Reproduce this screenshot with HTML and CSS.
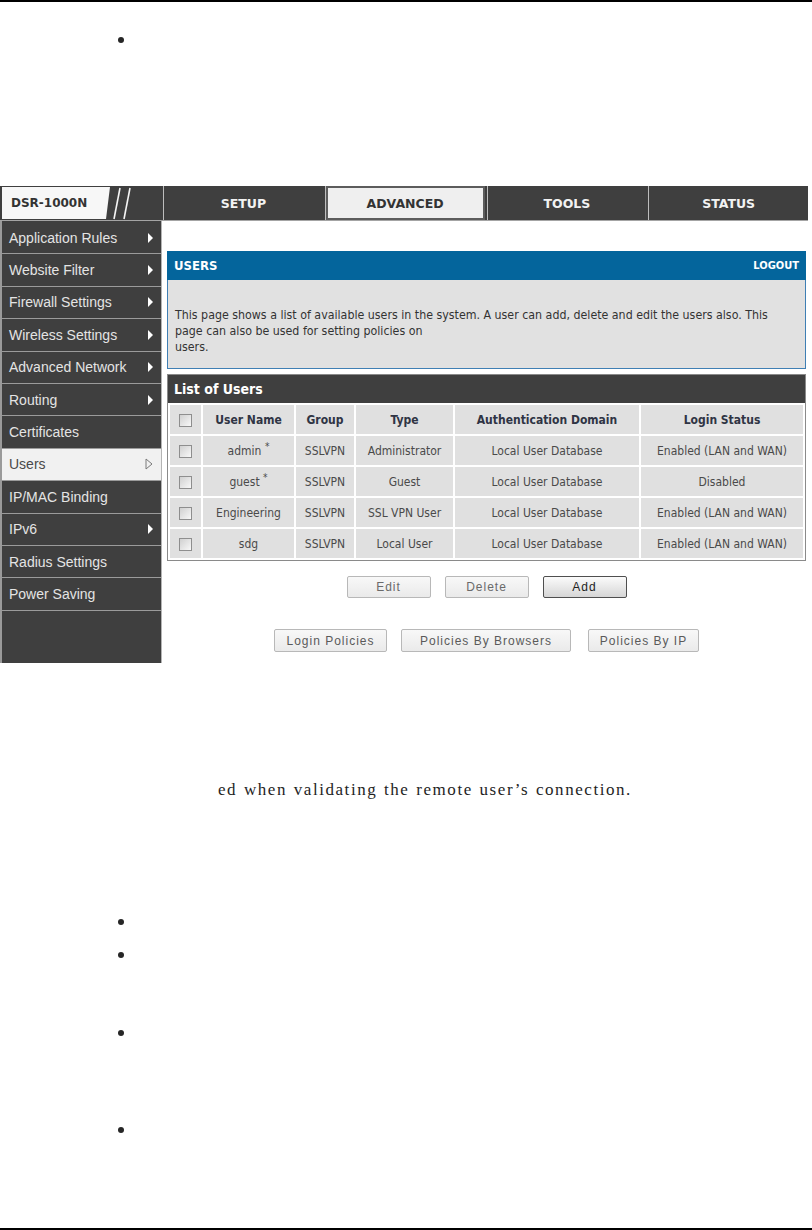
FILE: index.html
```html
<!DOCTYPE html>
<html lang="en">

<head>
    <meta charset="UTF-8">
    <title>DSR-1000N Users</title>
    <link rel="stylesheet" href="styles.css">
</head>

<body>
    <div class="page">
        <ul class="bullets bullets-top">
            <li></li>
        </ul>

        <div class="shot">
            <div class="topbar">
                <div class="logo">
                    <span class="logo-name">DSR-1000N</span>
                    <svg class="logo-slashes" width="30" height="33" viewBox="0 0 30 33">
                        <line x1="12" y1="1" x2="6" y2="32" stroke="#f4f4f4" stroke-width="1.6" />
                        <line x1="22" y1="1" x2="16" y2="32" stroke="#f4f4f4" stroke-width="1.6" />
                    </svg>
                </div>
                <div class="tab">SETUP</div>
                <div class="tab active">ADVANCED</div>
                <div class="tab">TOOLS</div>
                <div class="tab">STATUS</div>
            </div>

            <div class="main">
                <ul class="sidenav">
                    <li class="has-sub">Application Rules</li>
                    <li class="has-sub">Website Filter</li>
                    <li class="has-sub">Firewall Settings</li>
                    <li class="has-sub">Wireless Settings</li>
                    <li class="has-sub">Advanced Network</li>
                    <li class="has-sub">Routing</li>
                    <li>Certificates</li>
                    <li class="current">Users
                        <svg class="open-arrow" width="8" height="12" viewBox="0 0 8 12">
                            <path d="M1 1 L7 6 L1 11 Z" fill="none" stroke="#7a7a7a" stroke-width="1" />
                        </svg>
                    </li>
                    <li>IP/MAC Binding</li>
                    <li class="has-sub">IPv6</li>
                    <li>Radius Settings</li>
                    <li>Power Saving</li>
                </ul>

                <div class="content">
                    <div class="panel">
                        <div class="panel-head">
                            <span class="panel-title">USERS</span>
                            <span class="logout">LOGOUT</span>
                        </div>
                        <div class="panel-body">
                            This page shows a list of available users in the system. A user can add, delete and edit the users also. This<br>
                            page can also be used for setting policies on<br>
                            users.
                        </div>
                    </div>

                    <div class="list-box">
                        <div class="list-head">List of Users</div>
                        <table class="users">
                            <thead>
                                <tr>
                                    <th class="col-check"><span class="checkbox"></span></th>
                                    <th class="col-name">User Name</th>
                                    <th class="col-group">Group</th>
                                    <th class="col-type">Type</th>
                                    <th class="col-domain">Authentication Domain</th>
                                    <th class="col-status">Login Status</th>
                                </tr>
                            </thead>
                            <tbody>
                                <tr>
                                    <td><span class="checkbox"></span></td>
                                    <td>admin <sup>*</sup></td>
                                    <td>SSLVPN</td>
                                    <td>Administrator</td>
                                    <td>Local User Database</td>
                                    <td>Enabled (LAN and WAN)</td>
                                </tr>
                                <tr>
                                    <td><span class="checkbox"></span></td>
                                    <td>guest <sup>*</sup></td>
                                    <td>SSLVPN</td>
                                    <td>Guest</td>
                                    <td>Local User Database</td>
                                    <td>Disabled</td>
                                </tr>
                                <tr>
                                    <td><span class="checkbox"></span></td>
                                    <td>Engineering</td>
                                    <td>SSLVPN</td>
                                    <td>SSL VPN User</td>
                                    <td>Local User Database</td>
                                    <td>Enabled (LAN and WAN)</td>
                                </tr>
                                <tr>
                                    <td><span class="checkbox"></span></td>
                                    <td>sdg</td>
                                    <td>SSLVPN</td>
                                    <td>Local User</td>
                                    <td>Local User Database</td>
                                    <td>Enabled (LAN and WAN)</td>
                                </tr>
                            </tbody>
                        </table>
                    </div>

                    <div class="btn-row">
                        <button class="btn">Edit</button>
                        <button class="btn">Delete</button>
                        <button class="btn btn-main">Add</button>
                    </div>
                    <div class="btn-row btn-row-policies">
                        <button class="btn btn-login">Login Policies</button>
                        <button class="btn btn-browsers">Policies By Browsers</button>
                        <button class="btn btn-ip">Policies By IP</button>
                    </div>
                </div>
            </div>
        </div>

        <p class="caption">ed when validating the remote user’s connection.</p>

        <ul class="bullets bullets-bottom">
            <li></li>
            <li></li>
            <li></li>
            <li></li>
        </ul>
    </div>
</body>

</html>
```

FILE: styles.css
```css
/* Page */

body {
    margin: 0;
    background: #ffffff;
    font-family: 'Liberation Serif', serif;
}

.page {
    width: 812px;
    height: 1230px;
    box-sizing: border-box;
    border-top: 2px solid #000000;
    border-bottom: 2px solid #000000;
    overflow: hidden;
}
/* Bullets */

.bullets {
    list-style: none;
    margin: 0;
    padding: 0 0 0 118px;
}

.bullets li {
    height: 16px;
    display: flex;
    align-items: center;
}

.bullets li::before {
    content: '';
    width: 6px;
    height: 6px;
    border-radius: 50%;
    background: #262626;
}

.bullets-top {
    margin-top: 30px;
}

.bullets-bottom {
    margin-top: 114px;
}

.bullets-bottom li:nth-child(1) {
    margin-bottom: 17px;
}

.bullets-bottom li:nth-child(2) {
    margin-bottom: 62px;
}

.bullets-bottom li:nth-child(3) {
    margin-bottom: 81px;
}
/* Screenshot frame */

.shot {
    width: 808px;
    margin-top: 138px;
    font-family: 'Liberation Sans', Arial, sans-serif;
}
/* Top tabs */

.topbar {
    display: grid;
    grid-template-columns: 161px repeat(4, 1fr);
    column-gap: 2px;
    height: 35px;
    background: #3f3f3f;
    border-bottom: 1px solid #a4a4a4;
    box-sizing: border-box;
}

.logo {
    display: flex;
    align-items: center;
    padding-left: 2px;
    background: #3f3f3f;
}

.logo-name {
    display: flex;
    align-items: center;
    width: 108px;
    height: 32px;
    padding-left: 9px;
    box-sizing: border-box;
    background: #f7f7f7;
    clip-path: polygon(0 0, 100% 0, calc(100% - 4px) 100%, 0 100%);
    font-family: 'DejaVu Sans', sans-serif;
    font-weight: bold;
    font-size: 12px;
    color: #333333;
}

.logo-slashes {
    margin-left: -2px;
}

.tab {
    display: flex;
    align-items: center;
    justify-content: center;
    background: #3f3f3f;
    border-left: 1px solid #bdbdbd;
    font-family: 'DejaVu Sans', sans-serif;
    font-weight: bold;
    font-size: 12.5px;
    color: #f2f2f2;
}

.tab.active {
    background: #efefef;
    color: #333333;
    box-shadow: inset 0 0 0 2px #5c5c5c;
}
/* Body area */

.main {
    display: flex;
    height: 442px;
}

.sidenav {
    list-style: none;
    margin: 0;
    padding: 0;
    width: 159px;
    background: #3f3f3f;
    border-left: 2px solid #9a9a9a;
    border-right: 1px solid #b4b4b4;
}

.sidenav li {
    display: flex;
    align-items: center;
    justify-content: space-between;
    height: 31.4px;
    padding: 0 8px 0 7px;
    border-bottom: 1px solid #9b9b9b;
    font-size: 14px;
    color: #e4e4e4;
}

.sidenav li:first-child {
    padding-top: 1px;
}

.sidenav li.has-sub::after {
    content: '';
    border-left: 5px solid #ffffff;
    border-top: 5px solid transparent;
    border-bottom: 5px solid transparent;
}

.sidenav li.current {
    background: #f1f1f1;
    color: #4a4a4a;
}

.content {
    flex: 1;
    padding: 30px 2px 0 5px;
    background: #ffffff;
}
/* Users panel */

.panel-head {
    display: flex;
    justify-content: space-between;
    align-items: center;
    height: 29px;
    padding: 0 7px 0 7px;
    background: #04659c;
    color: #ffffff;
    font-family: 'DejaVu Sans Condensed', 'DejaVu Sans', sans-serif;
    font-weight: bold;
}

.panel-title {
    font-size: 13px;
}

.logout {
    font-size: 11px;
}

.panel-body {
    height: 89px;
    box-sizing: border-box;
    padding: 27px 7px 0 7px;
    background: #e1e1e1;
    border: 1px solid #3f7fb4;
    border-top: none;
    font-family: 'DejaVu Sans Condensed', 'DejaVu Sans', sans-serif;
    font-size: 12.3px;
    line-height: 16px;
    color: #333333;
}
/* List of users */

.list-box {
    margin-top: 5px;
    border: 1px solid #8a8a8a;
}

.list-head {
    height: 28px;
    display: flex;
    align-items: center;
    padding-left: 6px;
    background: #3f3f3f;
    color: #ffffff;
    font-family: 'DejaVu Sans Condensed', 'DejaVu Sans', sans-serif;
    font-weight: bold;
    font-size: 14px;
}

.users {
    width: 100%;
    border-collapse: separate;
    border-spacing: 2px;
    background: #ffffff;
    font-family: 'DejaVu Sans Condensed', 'DejaVu Sans', sans-serif;
    font-size: 12px;
}

.users th,
.users td {
    height: 29px;
    padding: 0;
    background: #e0e0e0;
    text-align: center;
    color: #4a4a4a;
}

.users th {
    font-weight: bold;
    font-size: 12px;
    color: #2f3444;
}

.users sup {
    font-size: 10px;
    vertical-align: 5px;
    line-height: 0;
}

.col-check {
    width: 31px;
}

.col-name {
    width: 91px;
}

.col-group {
    width: 58px;
}

.col-type {
    width: 97px;
}

.col-domain {
    width: 184px;
}

.checkbox {
    display: inline-block;
    width: 11px;
    height: 11px;
    vertical-align: middle;
    border: 1px solid #8e8e8e;
    background: linear-gradient(135deg, #d0d0d0, #f8f8f8);
}
/* Buttons */

.btn-row {
    display: flex;
    justify-content: center;
    gap: 14px;
    margin-top: 15px;
}

.btn-row-policies {
    margin-top: 31px;
}

.btn {
    width: 84px;
    height: 22px;
    padding: 0;
    background: linear-gradient(#f8f8f8, #eaeaea);
    border: 1px solid #b8b8b8;
    border-radius: 2px;
    font-family: 'Liberation Sans', Arial, sans-serif;
    font-size: 12px;
    letter-spacing: 1px;
    color: #6a6a6a;
}

.btn-main {
    background: linear-gradient(#fbfbfb, #d6d6d6);
    border-color: #4f4f4f;
    color: #222222;
}

.btn-row-policies .btn {
    height: 23px;
    color: #5a5a5a;
}

.btn-login {
    width: 113px;
}

.btn-browsers {
    width: 170px;
}

.btn-ip {
    width: 111px;
    margin-left: 3px;
}
/* Caption */

.caption {
    margin: 117px 0 0 0;
    padding-left: 218px;
    font-size: 17px;
    line-height: 20px;
    letter-spacing: 1.55px;
    word-spacing: 1px;
    color: #1e1e1e;
}
```
